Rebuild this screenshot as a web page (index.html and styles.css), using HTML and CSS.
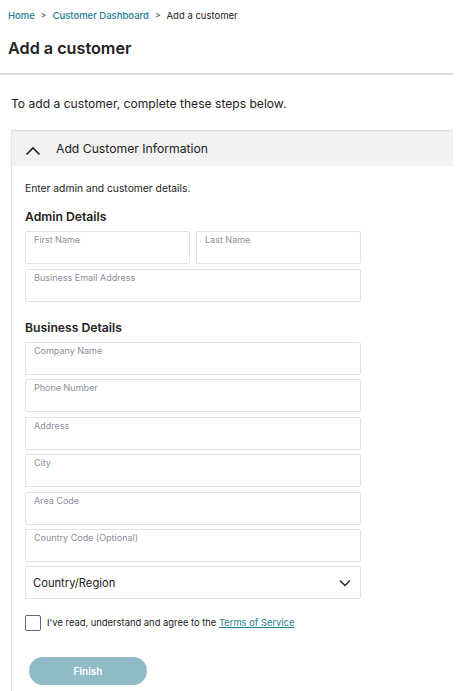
FILE: index.html
```html
<!DOCTYPE html>
<html lang="en">
<head>
<meta charset="utf-8">
<title>Add a customer</title>
<link rel="stylesheet" href="styles.css">
</head>
<body>
<nav class="crumbs">
  <a href="#" class="crumb-link">Home</a>
  <span class="sep">&gt;</span>
  <a href="#" class="crumb-link">Customer Dashboard</a>
  <span class="sep">&gt;</span>
  <span class="crumb-current">Add a customer</span>
</nav>
<h1 class="title">Add a customer</h1>
<div class="divider"></div>
<main class="content">
  <p class="intro">To add a customer, complete these steps below.</p>
  <section class="accordion">
    <div class="acc-head">
      <svg class="chev-up" width="16" height="10" viewBox="0 0 16 10"><path d="M1.5 8.5 L8 2 L14.5 8.5" fill="none" stroke="#222" stroke-width="1.6"/></svg>
      <span class="acc-title">Add Customer Information</span>
    </div>
    <div class="acc-body">
      <p class="hint">Enter admin and customer details.</p>
      <h2 class="group-title">Admin Details</h2>
      <div class="fields">
        <div class="row2">
          <div class="field"><span class="label">First Name</span></div>
          <div class="field"><span class="label">Last Name</span></div>
        </div>
        <div class="field"><span class="label">Business Email Address</span></div>
      </div>
      <h2 class="group-title biz">Business Details</h2>
      <div class="fields wide">
        <div class="field"><span class="label">Company Name</span></div>
        <div class="field"><span class="label">Phone Number</span></div>
        <div class="field"><span class="label">Address</span></div>
        <div class="field"><span class="label">City</span></div>
        <div class="field"><span class="label">Area Code</span></div>
        <div class="field"><span class="label">Country Code (Optional)</span></div>
        <div class="field select">
          <span class="select-text">Country/Region</span>
          <svg width="12" height="8" viewBox="0 0 12 8"><path d="M1 1.5 L6 6.5 L11 1.5" fill="none" stroke="#222" stroke-width="1.4"/></svg>
        </div>
      </div>
      <label class="agree">
        <span class="checkbox"></span>
        <span class="agree-text">I've read, understand and agree to the <a href="#" class="tos">Terms of Service</a></span>
      </label>
      <button class="finish" type="button">Finish</button>
    </div>
  </section>
</main>
</body>
</html>
```
FILE: styles.css
```css
* { box-sizing: border-box; }
html, body { margin: 0; padding: 0; background: #fff; }
body {
  font-family: Inter, "Noto Sans", sans-serif;
  color: #222;
  width: 458px;
  height: 691px;
  overflow: hidden;
}
.crumbs {
  display: flex;
  align-items: center;
  gap: 5px;
  padding: 7px 0 0 8px;
  font-size: 9.5px;
  line-height: 13px;
  height: 24px;
}
.crumb-link { color: #1f7e8f; text-decoration: none; font-weight: 500; }
.sep { color: #333; font-size: 8.5px; margin: 0 1px; }
.crumb-current { color: #222; }
.title {
  margin: 0;
  padding: 14px 0 0 8px;
  font-size: 16.2px;
  line-height: 20px;
  font-weight: 600;
  height: 49px;
}
.divider {
  width: 453px;
  height: 2px;
  background: #dcdcdf;
}
.content {
  padding: 0 5px 0 11px;
}
.intro {
  margin: 0;
  padding: 21px 0 0 0;
  height: 55px;
  font-size: 12.1px;
  line-height: 15px;
  color: #222;
}
.accordion {
  border-left: 1px solid #e4e4e4;
  border-top: 1px solid #dcdcdc;
  height: 580px;
}
.acc-head {
  height: 35px;
  background: #f2f2f2;
  display: flex;
  align-items: center;
  padding-left: 13px;
  gap: 15px;
}
.chev-up { margin-top: 4px; }
.acc-title { font-size: 12.2px; color: #222; }
.acc-body {
  padding: 15px 0 0 13px;
  width: 349px;
}
.hint {
  margin: 0;
  font-size: 10.3px;
  line-height: 14px;
  height: 14px;
  color: #222;
}
.group-title {
  margin: 0;
  padding-top: 14px;
  font-size: 12.2px;
  line-height: 16px;
  font-weight: 600;
  height: 36px;
}
.group-title.biz { padding-top: 18px; height: 40px; }
.fields { display: flex; flex-direction: column; gap: 5px; }
.fields.wide { gap: 4.4px; }
.row2 { display: grid; grid-template-columns: 1fr 1fr; gap: 6px; }
.field {
  height: 33px;
  border: 1px solid #e2e2e2;
  border-radius: 2px;
  padding: 2px 8px 0 8px;
  line-height: 11px;
}
.label { display: block; font-size: 9px; line-height: 11px; color: #8a909a; }
.field.select {
  display: flex;
  align-items: center;
  justify-content: space-between;
  padding: 0 9px 0 7px;
}
.select-text { font-size: 11.2px; line-height: 14px; color: #222; }
.agree {
  display: flex;
  align-items: center;
  gap: 6px;
  margin-top: 16px;
  height: 16px;
}
.checkbox {
  width: 16px;
  height: 16px;
  border: 1.5px solid #666;
  border-radius: 2px;
}
.agree-text { font-size: 9.4px; line-height: 12px; color: #222; }
.tos { color: #1f7e8f; text-decoration: underline; }
.finish {
  display: block;
  margin: 26px 0 0 4px;
  width: 118px;
  height: 28px;
  border: none;
  border-radius: 14px;
  background: #8fbcc6;
  color: #fff;
  font-family: inherit;
  font-size: 10px;
  font-weight: 600;
}
```
